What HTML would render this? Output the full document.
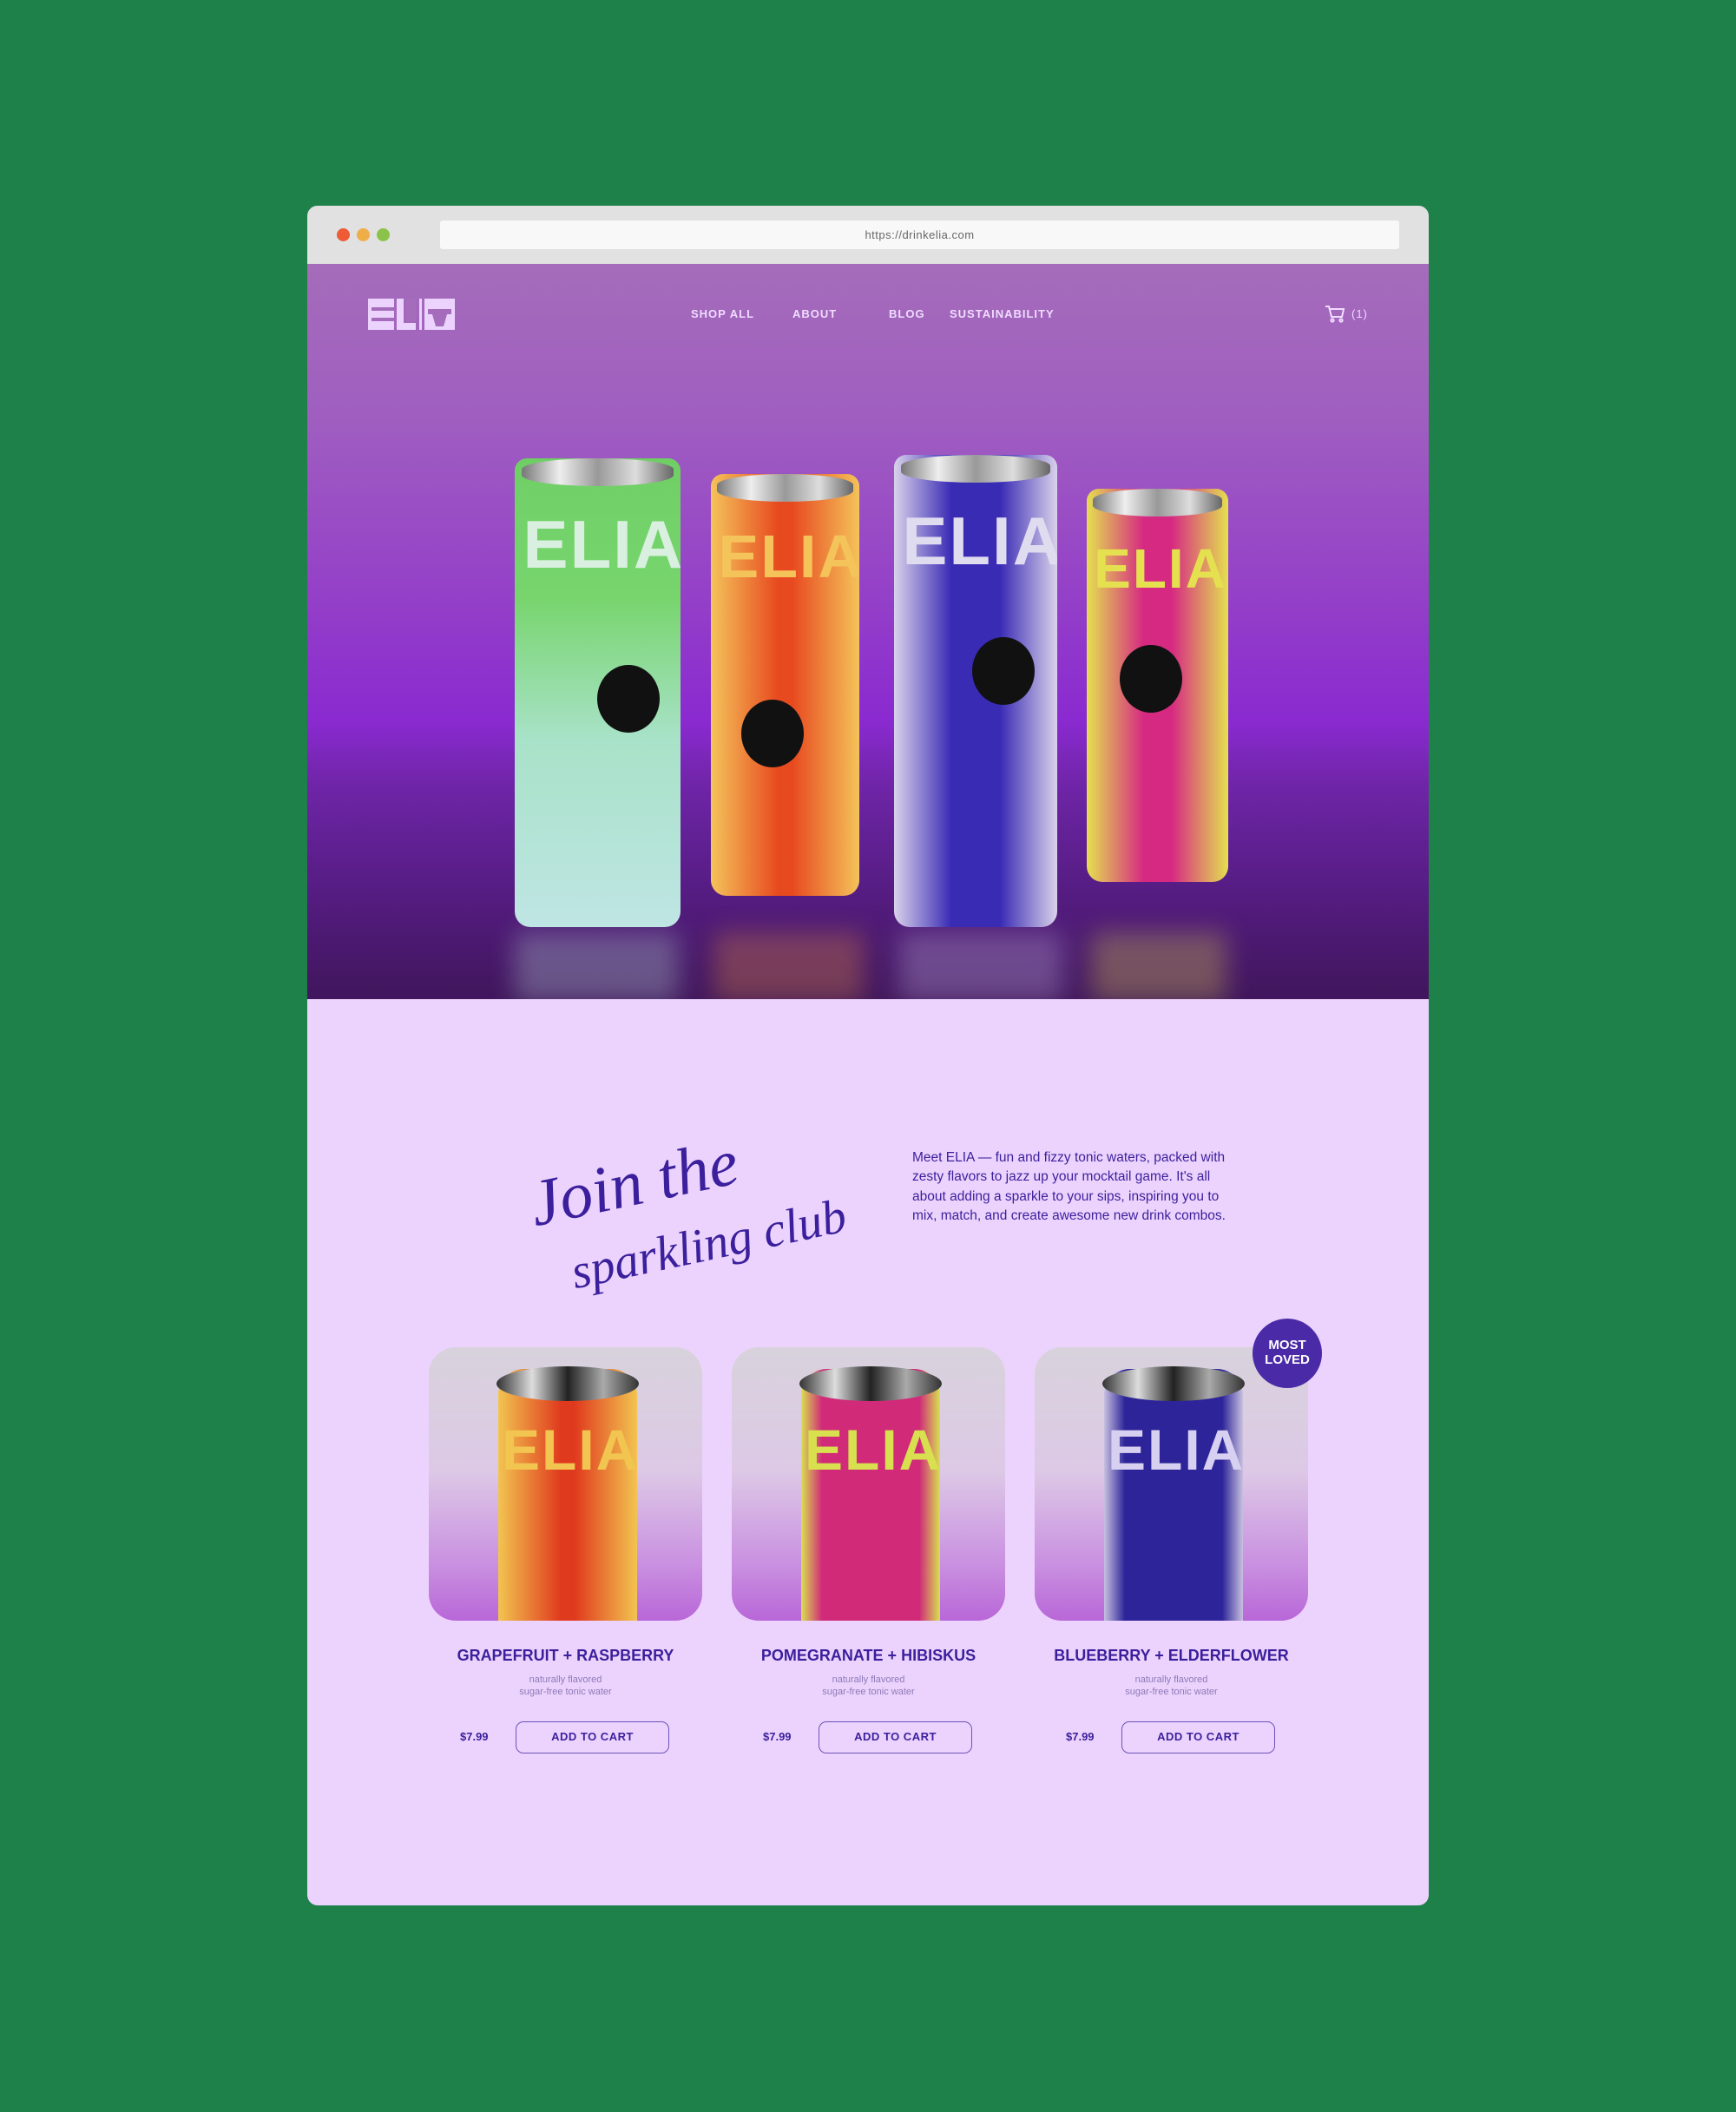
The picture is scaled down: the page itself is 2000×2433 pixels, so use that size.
<!DOCTYPE html>
<html><head><meta charset="utf-8"><style>
*{margin:0;padding:0;box-sizing:border-box}
body{width:2000px;height:2433px;background:#1e814a;position:relative;overflow:hidden;font-family:"Liberation Sans",sans-serif}
.win{position:absolute;left:354px;top:237px;width:1292px;height:1958px;border-radius:12px;overflow:hidden;background:#ecd3fd}
.bar{position:absolute;left:0;top:0;width:100%;height:67px;background:#e1e1e1}
.dot{position:absolute;top:26px;width:15px;height:15px;border-radius:50%}
.url{position:absolute;left:153px;top:17px;width:1105px;height:33px;background:#f8f8f8;border-radius:3px;font-size:13px;color:#666;text-align:center;line-height:33px;letter-spacing:.5px}
.hero{position:absolute;left:0;top:67px;width:100%;height:847px;overflow:hidden;background:linear-gradient(180deg,#a46cba 0%,#a05fc0 20%,#9440c8 45%,#8a2ad0 62%,#6f25a8 72%,#5a1e8c 85%,#45185f 100%)}
.nav{position:absolute;top:50px;font-size:13px;font-weight:bold;color:#f0dcff;letter-spacing:1px}
.can{position:absolute;border-radius:14px 14px 18px 18px;overflow:hidden}
.can .top{position:absolute;left:4%;right:4%;top:0;height:32px;border-radius:50%/40%;background:linear-gradient(90deg,#777,#eee,#999,#ddd,#666)}
.can .logo{position:absolute;left:5%;top:60px;font-size:78px;font-weight:bold;letter-spacing:2px;line-height:1}
.can .lbl{position:absolute;width:72px;height:78px;border-radius:50%;background:#111}
.card{position:absolute;top:1315px;width:315px;height:315px;border-radius:31px;overflow:hidden;background:linear-gradient(180deg,#d8d2dc 0%,#ddc9e6 45%,#c98fe0 80%,#b867d8 100%)}
.card .c{position:absolute;left:80px;top:25px;width:160px;height:300px;border-radius:30px 30px 0 0}
.card .cap{position:absolute;left:78px;top:22px;width:164px;height:40px;border-radius:50%;background:linear-gradient(90deg,#333,#ddd,#222,#aaa,#333)}
.card .L{position:absolute;left:84px;top:80px;font-size:66px;font-weight:bold;letter-spacing:2px}
.t{position:absolute;top:1660px;width:315px;text-align:center;font-size:18px;font-weight:bold;color:#3b1f9c}
.s{position:absolute;top:1691px;width:315px;text-align:center;font-size:11px;line-height:14px;color:#8d7ab7}
.p{position:absolute;top:1756px;font-size:13px;font-weight:bold;color:#3b1f9c}
.b{position:absolute;top:1746px;width:177px;height:37px;border:1.5px solid #6c52b8;border-radius:9px;text-align:center;line-height:34px;font-size:13px;font-weight:bold;color:#3b1f9c;letter-spacing:.5px}
</style></head><body>
<div class="win">
 <div class="bar">
  <div class="dot" style="left:34px;background:#ef5b36"></div>
  <div class="dot" style="left:57px;background:#efae47"></div>
  <div class="dot" style="left:80px;background:#8bc34a"></div>
  <div class="url">https://drinkelia.com</div>
 </div>
 <div class="hero">
  <svg style="position:absolute;left:70px;top:40px" width="100" height="36" viewBox="0 0 100 36">
   <g fill="#ecd3fd"><rect x="0" y="0" width="30" height="36"/><rect x="33" y="0" width="8" height="36"/><rect x="33" y="28" width="22" height="8"/><rect x="59" y="0" width="3" height="36"/><rect x="65" y="0" width="35" height="36"/></g>
   <g fill="#a46cba"><rect x="4" y="10" width="26" height="4"/><rect x="4" y="22" width="26" height="4"/><rect x="44" y="0" width="11" height="26"/><path d="M69 12h27v6h-5l-4 14h-9l-4-14h-5z"/></g>
  </svg>
  <div class="nav" style="left:442px">SHOP ALL</div>
  <div class="nav" style="left:559px">ABOUT</div>
  <div class="nav" style="left:670px">BLOG</div>
  <div class="nav" style="left:740px">SUSTAINABILITY</div>
  <svg style="position:absolute;left:1172px;top:47px" width="24" height="22" viewBox="0 0 24 22" fill="none" stroke="#f0dcff" stroke-width="2"><path d="M1 2h4l3 12h12l2-9H6"/><circle cx="9" cy="18" r="1.6"/><circle cx="19" cy="18" r="1.6"/></svg>
  <div class="nav" style="left:1203px;font-weight:normal">(1)</div>
  <div style="position:absolute;left:0;top:560px;width:100%;height:290px;background:linear-gradient(180deg,rgba(120,40,180,.3),rgba(60,20,90,.5));"></div>
  <div style="position:absolute;left:239px;top:770px;width:820px;height:80px;background:linear-gradient(90deg,rgba(190,230,220,.3) 0 23%,transparent 23% 28%,rgba(240,150,60,.3) 28% 49%,transparent 49% 54%,rgba(200,190,230,.3) 54% 77%,transparent 77% 81%,rgba(230,220,80,.3) 81% 100%);filter:blur(14px)"></div>
  <div class="can" style="left:239px;top:224px;width:191px;height:540px;background:linear-gradient(180deg,#6fcf65 0%,#78d56e 30%,#a8e2c8 60%,#bfe5e4 100%)"><div class="top"></div><div class="logo" style="color:#d9f0e0">ELIA</div><div class="lbl" style="left:95px;top:238px"></div></div>
  <div class="can" style="left:465px;top:242px;width:171px;height:486px;background:linear-gradient(90deg,#f4c35a 0%,#e84a20 45%,#e84a20 55%,#f4c35a 100%)"><div class="top"></div><div class="logo" style="color:#f4c35a;font-size:70px">ELIA</div><div class="lbl" style="left:35px;top:260px"></div></div>
  <div class="can" style="left:676px;top:220px;width:188px;height:544px;background:linear-gradient(90deg,#d9d2ea 0%,#3a2bb5 35%,#3a2bb5 65%,#d9d2ea 100%)"><div class="top"></div><div class="logo" style="color:#e0dcf0">ELIA</div><div class="lbl" style="left:90px;top:210px"></div></div>
  <div class="can" style="left:898px;top:259px;width:163px;height:453px;background:linear-gradient(90deg,#e4e050 0%,#d62a82 40%,#d62a82 60%,#e4e050 100%)"><div class="top"></div><div class="logo" style="color:#e4e050;font-size:64px">ELIA</div><div class="lbl" style="left:38px;top:180px"></div></div>
 </div>
 <svg style="position:absolute;left:240px;top:1020px" width="440" height="280" viewBox="0 0 440 280">
  <g transform="rotate(-12 190 125)" fill="#3b1f9c" font-family="Liberation Serif,serif" font-style="italic">
   <text x="20" y="120" font-size="76">Join the</text>
   <text x="50" y="200" font-size="56">sparkling club</text>
  </g>
 </svg>
 <div style="position:absolute;left:697px;top:1086px;width:380px;font-size:15.5px;line-height:22.3px;color:#3b1f9c">Meet ELIA — fun and fizzy tonic waters, packed with zesty flavors to jazz up your mocktail game. It's all about adding a sparkle to your sips, inspiring you to mix, match, and create awesome new drink combos.</div>

 <div class="card" style="left:140px"><div class="c" style="background:linear-gradient(90deg,#f2c450,#e03a1e 45%,#e03a1e 55%,#f2c450)"></div><div class="cap"></div><div class="L" style="color:#f2c450">ELIA</div></div>
 <div class="card" style="left:489px"><div class="c" style="background:linear-gradient(90deg,#d8e050,#d02a78 15%,#d02a78 85%,#d8e050)"></div><div class="cap"></div><div class="L" style="color:#d8e050">ELIA</div></div>
 <div class="card" style="left:838px"><div class="c" style="background:linear-gradient(90deg,#c8c0e0,#2c2498 15%,#2c2498 85%,#c8c0e0)"></div><div class="cap"></div><div class="L" style="color:#d8d0f0">ELIA</div></div>
 <div style="position:absolute;left:1089px;top:1282px;width:80px;height:80px;border-radius:50%;background:#4a2aa6;color:#fff;font-size:15px;font-weight:bold;text-align:center;padding-top:22px;line-height:17px">MOST<br>LOVED</div>

 <div class="t" style="left:140px">GRAPEFRUIT + RASPBERRY</div>
 <div class="t" style="left:489px">POMEGRANATE + HIBISKUS</div>
 <div class="t" style="left:838px">BLUEBERRY + ELDERFLOWER</div>
 <div class="s" style="left:140px">naturally flavored<br>sugar-free tonic water</div>
 <div class="s" style="left:489px">naturally flavored<br>sugar-free tonic water</div>
 <div class="s" style="left:838px">naturally flavored<br>sugar-free tonic water</div>
 <div class="p" style="left:176px">$7.99</div><div class="b" style="left:240px">ADD TO CART</div>
 <div class="p" style="left:525px">$7.99</div><div class="b" style="left:589px">ADD TO CART</div>
 <div class="p" style="left:874px">$7.99</div><div class="b" style="left:938px">ADD TO CART</div>
</div>
</body></html>
